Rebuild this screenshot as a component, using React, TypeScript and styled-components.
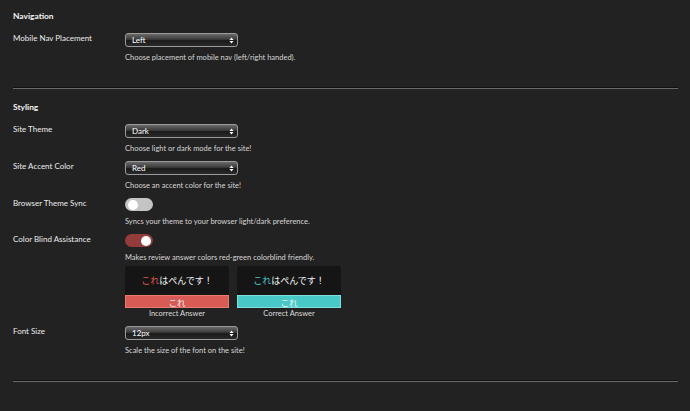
import styled, { createGlobalStyle } from 'styled-components';

const GlobalStyle = createGlobalStyle`
  html, body {
    margin: 0;
    padding: 0;
    background: #222222;
  }
  body {
    font-family: Lato, "Noto Sans CJK JP", sans-serif;
    color: #ececec;
  }
`;

const Page = styled.div`
  padding: 10px 12px 0 13px;
  width: 665px;
`;

const Section = styled.section`
  display: flex;
  flex-direction: column;
`;

const SectionTitle = styled.h2`
  margin: 0 0 10px;
  font-size: 8.4px;
  font-weight: 700;
  color: #f4f4f4;
  line-height: 12px;
`;

const Row = styled.div`
  display: grid;
  grid-template-columns: 112px 1fr;
  margin-bottom: 6px;
`;

const Label = styled.div`
  font-size: 8px;
  line-height: 12px;
  color: #ececec;
`;

const Control = styled.div`
  display: flex;
  flex-direction: column;
  padding-top: 1px;
`;

const Help = styled.div`
  font-size: 7.5px;
  line-height: 10px;
  color: #d6d6d6;
  margin-top: 6px;
`;

const Select = styled.div`
  box-sizing: border-box;
  width: 113px;
  height: 14px;
  display: flex;
  align-items: center;
  justify-content: space-between;
  padding: 0 3px 0 6px;
  border: 1px solid #9a9a9a;
  border-radius: 3px;
  background: linear-gradient(#6a6a6a 0%, #3a3a3a 45%, #1a1a1a 55%, #2a2a2a 100%);
  font-size: 8px;
  color: #ffffff;
`;

const Toggle = styled.div<{ $on: boolean }>`
  position: relative;
  width: 28px;
  height: 13px;
  border-radius: 7px;
  background: ${(p) => (p.$on ? '#943c3c' : '#c4c4c4')};
`;

const Knob = styled.span<{ $on: boolean }>`
  position: absolute;
  top: 1.5px;
  left: ${(p) => (p.$on ? '16px' : '2.5px')};
  width: 10px;
  height: 10px;
  border-radius: 50%;
  background: #ffffff;
`;

const Samples = styled.div`
  display: flex;
  gap: 8px;
  margin-top: 3px;
`;

const Sample = styled.div`
  display: flex;
  flex-direction: column;
  width: 104px;
`;

const Prompt = styled.div`
  height: 29px;
  background: #151515;
  border-radius: 2px 2px 0 0;
  display: flex;
  align-items: center;
  justify-content: center;
  font-size: 9px;
  color: #f2f2f2;
`;

const Accent = styled.span<{ $color: string }>`
  color: ${(p) => p.$color};
`;

const Answer = styled.div<{ $color: string; $edge: string }>`
  box-sizing: border-box;
  height: 13px;
  background: ${(p) => p.$color};
  border: 1px solid ${(p) => p.$edge};
  display: flex;
  align-items: center;
  justify-content: center;
  font-size: 8.5px;
  color: #f4f4f4;
`;

const Caption = styled.div`
  text-align: center;
  font-size: 7.5px;
  line-height: 10px;
  color: #dcdcdc;
  margin-top: 1px;
`;

const Divider = styled.hr<{ $before: number; $after: number }>`
  margin: ${(p) => p.$before}px 0 ${(p) => p.$after}px;
  height: 1px;
  border: none;
  background: #6a6a6a;
  border-top: 1px solid #111;
  box-sizing: content-box;
`;

const Arrows = () => (
  <svg width="5" height="7" viewBox="0 0 5 7">
    <path d="M2.5 0.5 L4.5 3 H0.5 Z" fill="#fff" />
    <path d="M2.5 6.5 L4.5 4 H0.5 Z" fill="#fff" />
  </svg>
);

const Dropdown = ({ value }: { value: string }) => (
  <Select>
    <span>{value}</span>
    <Arrows />
  </Select>
);

export default function App() {
  return (
    <>
      <GlobalStyle />
      <Page>
        <Section>
          <SectionTitle>Navigation</SectionTitle>
          <Row>
            <Label>Mobile Nav Placement</Label>
            <Control>
              <Dropdown value="Left" />
              <Help>Choose placement of mobile nav (left/right handed).</Help>
            </Control>
          </Row>
        </Section>
        <Divider $before={18} $after={12} />
        <Section>
          <SectionTitle>Styling</SectionTitle>
          <Row>
            <Label>Site Theme</Label>
            <Control>
              <Dropdown value="Dark" />
              <Help>Choose light or dark mode for the site!</Help>
            </Control>
          </Row>
          <Row>
            <Label>Site Accent Color</Label>
            <Control>
              <Dropdown value="Red" />
              <Help>Choose an accent color for the site!</Help>
            </Control>
          </Row>
          <Row>
            <Label>Browser Theme Sync</Label>
            <Control>
              <Toggle $on={false}>
                <Knob $on={false} />
              </Toggle>
              <Help>Syncs your theme to your browser light/dark preference.</Help>
            </Control>
          </Row>
          <Row>
            <Label>Color Blind Assistance</Label>
            <Control>
              <Toggle $on>
                <Knob $on />
              </Toggle>
              <Help>Makes review answer colors red-green colorblind friendly.</Help>
              <Samples>
                <Sample>
                  <Prompt>
                    <Accent $color="#e05a4f">これ</Accent>はぺんです！
                  </Prompt>
                  <Answer $color="#d95b55" $edge="#e87a72">これ</Answer>
                  <Caption>Incorrect Answer</Caption>
                </Sample>
                <Sample>
                  <Prompt>
                    <Accent $color="#4cc9c9">これ</Accent>はぺんです！
                  </Prompt>
                  <Answer $color="#48c9c8" $edge="#7fe0dd">これ</Answer>
                  <Caption>Correct Answer</Caption>
                </Sample>
              </Samples>
            </Control>
          </Row>
          <Row>
            <Label>Font Size</Label>
            <Control>
              <Dropdown value="12px" />
              <Help>Scale the size of the font on the site!</Help>
            </Control>
          </Row>
        </Section>
        <Divider $before={18} $after={0} />
      </Page>
    </>
  );
}
